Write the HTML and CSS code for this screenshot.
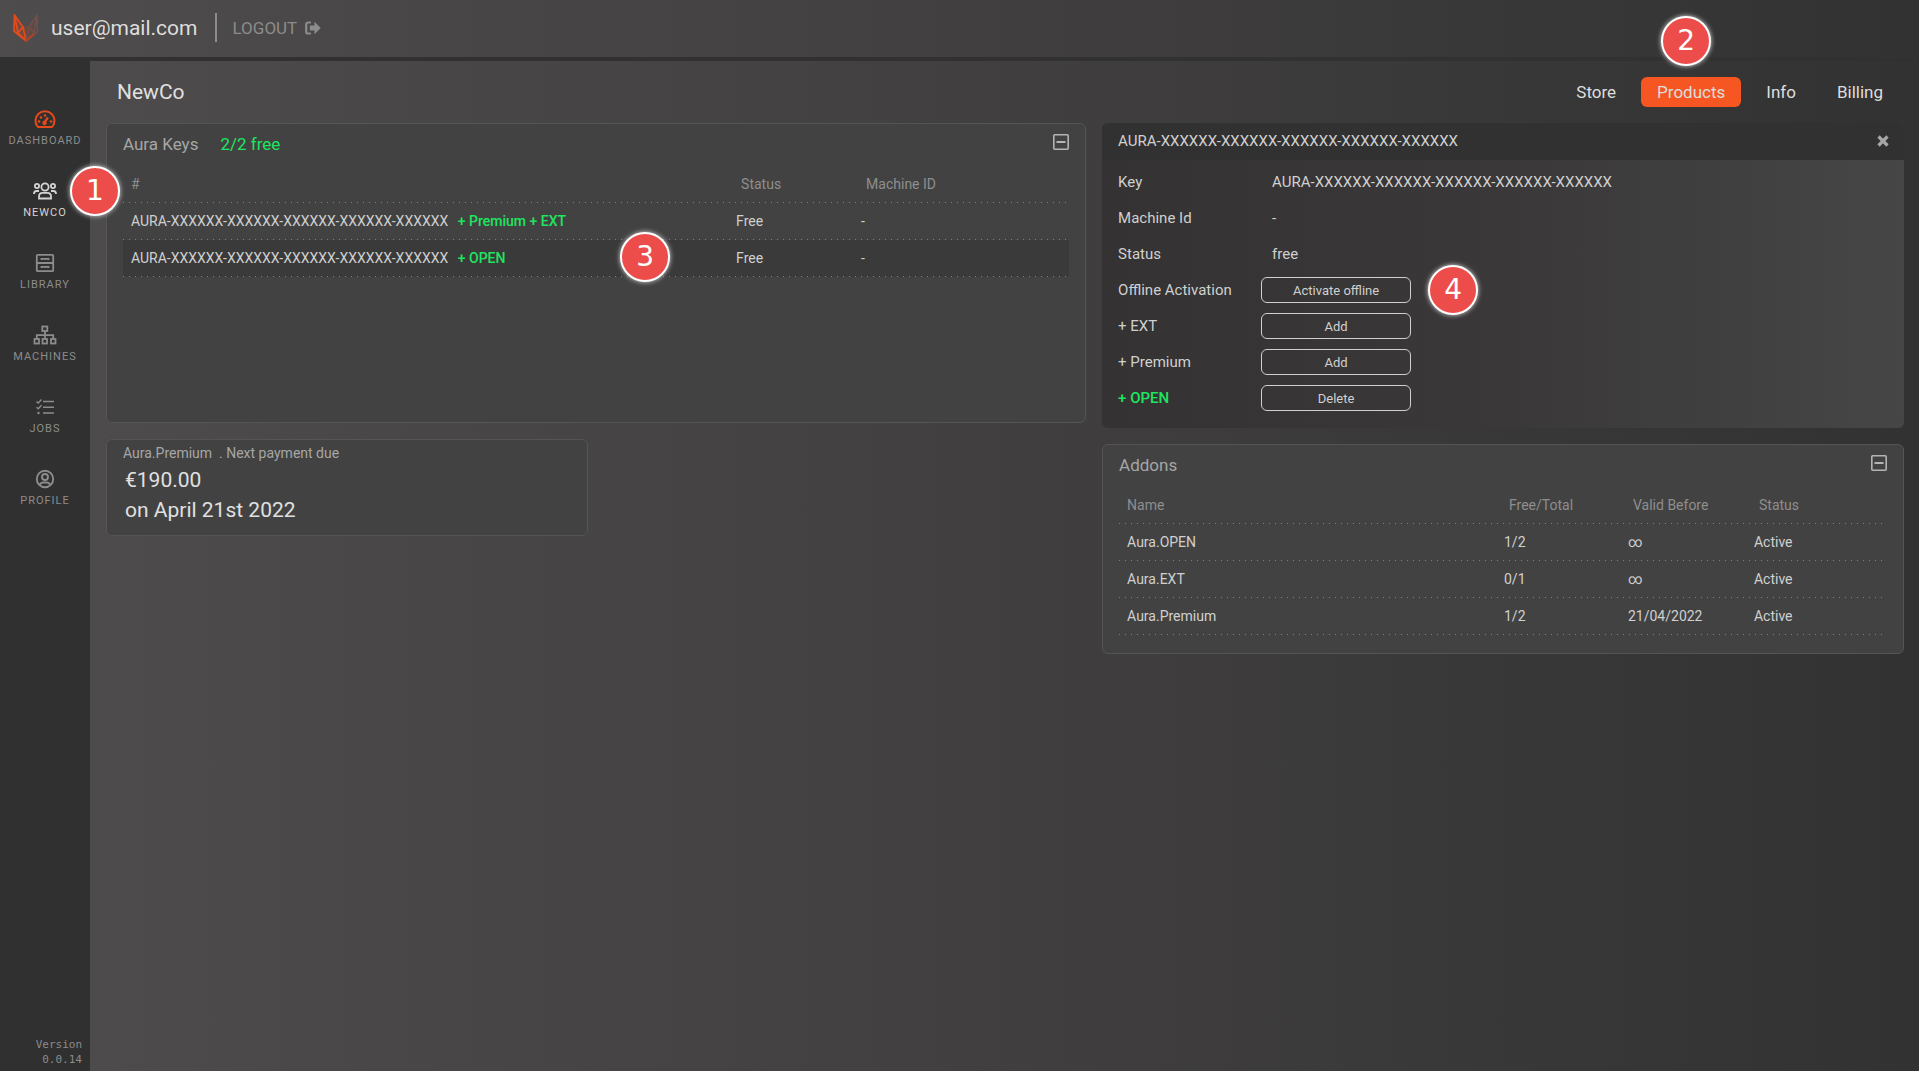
FILE: index.html
```html
<!DOCTYPE html>
<html lang="en">
<head>
  <meta charset="UTF-8">
  <meta name="viewport" content="width=device-width, initial-scale=1.0">
  <title>NewCo - Products</title>
  <link rel="stylesheet" href="styles.css">
</head>
<body>
  <header class="topbar">
    <svg class="logo" viewBox="0 0 26 28" width="26" height="28" aria-hidden="true">
      <defs>
        <linearGradient id="fox" x1="0" y1="0" x2="1" y2="0">
          <stop offset="0" stop-color="#f04a16"/>
          <stop offset="0.5" stop-color="#b04426"/>
          <stop offset="1" stop-color="#5a4a48"/>
        </linearGradient>
      </defs>
      <path d="M1 1 L0 17 L13 27 L24 18 L25 1 L16 12 L10 12 Z" fill="url(#fox)" opacity="0.3"/>
      <path d="M1.500 1 L10 13 L13 27 L1 17 Z M1.500 1 L5 19 L10 13 M5 19 L13 27" fill="none" stroke="#e24a1c" stroke-width="1.800"/>
      <path d="M24 1 L16 13 L13 27 L24.500 18 Z M24 1 L21 19 L16 13" fill="none" stroke="#70504a" stroke-width="1.500"/>
      <path d="M13 27 L21 20" stroke="#b04428" stroke-width="2.200"/>
    </svg>
    <span class="user">user@mail.com</span>
    <a href="#logout" class="logout">LOGOUT
      <svg viewBox="0 0 16 14" width="16" height="14" aria-hidden="true">
        <path d="M6 1.500H3A1.800 1.800 0 0 0 1.200 3.300V10.700A1.800 1.800 0 0 0 3 12.500H6" fill="none" stroke="currentColor" stroke-width="2.200"/>
        <path d="M9.500 0.800 L15.800 7 L9.500 13.200 V9.600 H4.800 V4.400 H9.500 Z" fill="currentColor"/>
      </svg>
    </a>
  </header>

  <div class="layout">
    <nav class="sidebar">
      <a href="#dashboard" class="side-link dashboard">
        <svg viewBox="0 0 22 18" width="22" height="18" fill="none" stroke="currentColor" stroke-width="2">
          <path d="M3.500 16.500 A9.500 9.500 0 1 1 18.500 16.500 Q18 17 17.500 17 H4.500 Q4 17 3.500 16.500 Z"/>
          <path d="M10 13 L14 7.500" stroke-width="2.200"/>
          <g fill="currentColor" stroke="none">
            <circle cx="10.500" cy="13" r="2.200"/><circle cx="5" cy="11.500" r="1.300"/>
            <circle cx="7" cy="7.500" r="1.300"/><circle cx="11" cy="5.500" r="1.300"/><circle cx="17" cy="11.500" r="1.300"/>
          </g>
        </svg>
        <span>DASHBOARD</span>
      </a>
      <a href="#newco" class="side-link current">
        <svg viewBox="0 0 24 18" width="24" height="18" fill="none" stroke="currentColor" stroke-width="1.800">
          <circle cx="12" cy="5" r="3.600"/>
          <circle cx="4" cy="4" r="2.100"/><circle cx="20" cy="4" r="2.100"/>
          <path d="M6 16.500 V14.500 Q6 10.800 9.500 10.800 H14.500 Q18 10.800 18 14.500 V16.500 Z"/>
          <path d="M1 12 Q1 9 3.500 9 H6 M23 12 Q23 9 20.500 9 H18"/>
        </svg>
        <span>NEWCO</span>
        <b class="step step-1">1</b>
      </a>
      <a href="#library" class="side-link">
        <svg viewBox="0 0 20 20" width="20" height="20" fill="none" stroke="currentColor" stroke-width="1.800">
          <rect x="1.800" y="1.800" width="16.400" height="16.400" rx="1"/>
          <path d="M2 10 H18 M6.500 7 V5.800 H13.500 V7 M6.500 15 V13.800 H13.500 V15"/>
        </svg>
        <span>LIBRARY</span>
      </a>
      <a href="#machines" class="side-link">
        <svg viewBox="0 0 24 20" width="24" height="20" fill="none" stroke="currentColor" stroke-width="1.800">
          <rect x="9.300" y="1.500" width="5" height="4.500"/>
          <rect x="1.500" y="14" width="4.500" height="4.500"/><rect x="9.500" y="14" width="4.500" height="4.500"/><rect x="18" y="14" width="4.500" height="4.500"/>
          <path d="M12 6 V14 M3.800 14 V10.200 H20.200 V14"/>
        </svg>
        <span>MACHINES</span>
      </a>
      <a href="#jobs" class="side-link">
        <svg viewBox="0 0 20 18" width="20" height="18" fill="none" stroke="currentColor" stroke-width="1.400">
          <path d="M8 3.500 H19 M8 9.200 H19 M8 15 H19"/>
          <path d="M1.500 3.500 L3.200 5 L6.500 1.500 M1.500 9.200 L3.200 10.800 L6.500 7.300"/>
          <circle cx="3.500" cy="15" r="1.200" fill="currentColor" stroke="none"/>
        </svg>
        <span>JOBS</span>
      </a>
      <a href="#profile" class="side-link">
        <svg viewBox="0 0 20 20" width="20" height="20" fill="none" stroke="currentColor" stroke-width="1.900">
          <circle cx="10" cy="10" r="8.200"/><circle cx="10" cy="8" r="3"/>
          <path d="M4.500 15.800 Q6 13.500 8 13.500 H12 Q14 13.500 15.500 15.800"/>
        </svg>
        <span>PROFILE</span>
      </a>
      <p class="version">Version<br>0.0.14</p>
    </nav>

    <main>
      <div class="page-head">
        <h1>NewCo</h1>
        <nav class="tabs">
          <a href="#store">Store</a>
          <a href="#products" class="active">Products<b class="step step-2">2</b></a>
          <a href="#info">Info</a>
          <a href="#billing">Billing</a>
        </nav>
      </div>

      <div class="columns">
        <div class="column">
          <section class="panel keys">
            <div class="panel-head">
              <h2>Aura Keys</h2>
              <span class="free">2/2 free</span>
              <button class="collapse" aria-label="Collapse">
                <svg viewBox="0 0 16 16" width="16" height="16" fill="none" stroke="currentColor" stroke-width="1.600"><rect x="0.800" y="0.800" width="14.400" height="14.400" rx="1"/><path d="M3.500 8 H12.500" stroke-width="2"/></svg>
              </button>
            </div>
            <table>
              <thead>
                <tr><th>#</th><th class="col-status">Status</th><th class="col-machine">Machine ID</th></tr>
              </thead>
              <tbody>
                <tr>
                  <td>AURA-XXXXXX-XXXXXX-XXXXXX-XXXXXX-XXXXXX <span class="addon">+ Premium + EXT</span></td>
                  <td>Free</td>
                  <td>-</td>
                </tr>
                <tr class="selected">
                  <td>AURA-XXXXXX-XXXXXX-XXXXXX-XXXXXX-XXXXXX <span class="addon">+ OPEN</span><b class="step step-3">3</b></td>
                  <td>Free</td>
                  <td>-</td>
                </tr>
              </tbody>
            </table>
          </section>

          <section class="panel payment">
            <h3>Aura.Premium &nbsp;. Next payment due</h3>
            <p>€190.00</p>
            <p>on April 21st 2022</p>
          </section>
        </div>

        <div class="column">
          <section class="detail">
            <div class="detail-head">
              <h2>AURA-XXXXXX-XXXXXX-XXXXXX-XXXXXX-XXXXXX</h2>
              <button class="close" aria-label="Close">
                <svg viewBox="0 0 12 12" width="12" height="12" stroke="currentColor" stroke-width="3.200"><path d="M1.500 1.500 L10.500 10.500 M10.500 1.500 L1.500 10.500"/></svg>
              </button>
            </div>
            <dl>
              <dt>Key</dt>
              <dd class="value">AURA-XXXXXX-XXXXXX-XXXXXX-XXXXXX-XXXXXX</dd>
              <dt>Machine Id</dt>
              <dd class="value">-</dd>
              <dt>Status</dt>
              <dd class="value">free</dd>
              <dt>Offline Activation</dt>
              <dd><button>Activate offline</button><b class="step step-4">4</b></dd>
              <dt>+ EXT</dt>
              <dd><button>Add</button></dd>
              <dt>+ Premium</dt>
              <dd><button>Add</button></dd>
              <dt class="owned">+ OPEN</dt>
              <dd><button>Delete</button></dd>
            </dl>
          </section>

          <section class="panel addons">
            <div class="panel-head">
              <h2>Addons</h2>
              <button class="collapse" aria-label="Collapse">
                <svg viewBox="0 0 16 16" width="16" height="16" fill="none" stroke="currentColor" stroke-width="1.600"><rect x="0.800" y="0.800" width="14.400" height="14.400" rx="1"/><path d="M3.500 8 H12.500" stroke-width="2"/></svg>
              </button>
            </div>
            <table>
              <thead>
                <tr><th>Name</th><th class="col-total">Free/Total</th><th class="col-valid">Valid Before</th><th class="col-active">Status</th></tr>
              </thead>
              <tbody>
                <tr><td>Aura.OPEN</td><td>1/2</td><td>∞</td><td>Active</td></tr>
                <tr><td>Aura.EXT</td><td>0/1</td><td>∞</td><td>Active</td></tr>
                <tr><td>Aura.Premium</td><td>1/2</td><td>21/04/2022</td><td>Active</td></tr>
              </tbody>
            </table>
          </section>
        </div>
      </div>
    </main>
  </div>
</body>
</html>
```

FILE: styles.css
```css
* {
  box-sizing: border-box;
}
body {
  margin: 0;
  min-height: 100vh;
  display: flex;
  flex-direction: column;
  font-family: Roboto, sans-serif;
  font-size: 14px;
  color: #d0d0d0;
  background: linear-gradient(to right, #4e4c4c, #403e3e 55%, #323232);
}
h1, h2, h3, p, dl, dd {
  margin: 0;
  font-weight: 400;
}
a {
  color: inherit;
  text-decoration: none;
}
button {
  font-family: inherit;
  color: inherit;
  background: none;
  border: 0;
  padding: 0;
  cursor: pointer;
}
svg {
  display: block;
}

/* Top bar */
.topbar {
  display: flex;
  align-items: center;
  height: 61px;
  padding: 0 13px 2px;
  border-bottom: 4px solid #313131;
}
.user {
  margin-left: 12px;
  font-size: 21px;
  color: #dedede;
}
.logout {
  display: flex;
  align-items: center;
  gap: 8px;
  height: 29px;
  margin-left: 17px;
  padding-left: 16px;
  border-left: 2px solid #8c8c8c;
  font-size: 17px;
  color: #8c8c8c;
}

/* Sidebar */
.layout {
  flex: 1;
  display: flex;
}
.sidebar {
  width: 90px;
  display: flex;
  flex-direction: column;
  gap: 30px;
  padding: 46px 0 4px;
  background: #303030;
}
.side-link {
  position: relative;
  display: grid;
  grid-template-rows: 24px 18px;
  place-items: center;
  font-size: 11px;
  letter-spacing: 1px;
  color: #8c8c8c;
}
.side-link.dashboard svg {
  color: #e64a19;
}
.side-link.current {
  color: #d4d4d4;
}
.version {
  margin-top: auto;
  padding-right: 8px;
  text-align: right;
  font: 11px/15px "DejaVu Sans Mono", monospace;
  color: #8c8c8c;
}

/* Content */
main {
  flex: 1;
  min-width: 0;
  padding: 0 15px 16px 16px;
}
.page-head {
  display: flex;
  align-items: center;
  justify-content: space-between;
  height: 62px;
  padding: 0 5px 0 11px;
}
h1 {
  font-size: 21px;
  color: #e0e0e0;
}
.tabs {
  display: flex;
  gap: 9px;
}
.tabs a {
  position: relative;
  padding: 0 16px;
  border-radius: 6px;
  font-size: 17px;
  line-height: 30px;
  color: #dedede;
}
.tabs .active {
  background: #f65621;
}
.columns {
  display: grid;
  grid-template-columns: 11fr 9fr;
  gap: 16px;
}
.column {
  display: flex;
  flex-direction: column;
  gap: 16px;
  min-width: 0;
}

/* Panels */
.panel {
  padding: 0 16px 18px;
  background: #424242;
  border: 1px solid #555;
  border-radius: 6px;
}
.panel-head {
  display: flex;
  align-items: center;
  height: 40px;
  margin-bottom: 2px;
}
.panel h2 {
  font-size: 17px;
  color: #a6a6a6;
}
.free {
  margin-left: 22px;
  font-size: 17px;
  color: #1ee560;
}
.collapse {
  margin-left: auto;
  padding-bottom: 4px;
  color: #b4b4b4;
}
.keys {
  min-height: 300px;
}

table {
  width: 100%;
  table-layout: fixed;
  border-collapse: collapse;
}
tr {
  height: 37px;
  background: repeating-linear-gradient(to right, #808080 0 1px, transparent 1px 6px) bottom / 100% 1px no-repeat;
}
tr.selected {
  background-color: #3a3a3a;
}
th, td {
  position: relative;
  padding: 0 8px 2px;
  text-align: left;
  white-space: nowrap;
}
th {
  padding-left: 13px;
  font-weight: 400;
  color: #8e8e8e;
}
th:first-child {
  padding-left: 8px;
}
.addon {
  margin-left: 6px;
  font-weight: 500;
  color: #1ee560;
}
.col-status {
  width: 125px;
}
.col-machine {
  width: 216px;
}
.col-total {
  width: 124px;
}
.col-valid {
  width: 126px;
}
.col-active {
  width: 141px;
}

.payment {
  width: calc(50% - 8px);
  padding: 3px 16px 10px;
}
.payment h3 {
  margin-bottom: 2px;
  font-size: 14px;
  line-height: 20px;
  color: #a6a6a6;
}
.payment p {
  padding-left: 2px;
  font-size: 21px;
  line-height: 30px;
  color: #e0e0e0;
}

/* Selected key */
.detail {
  border-radius: 6px;
  background: linear-gradient(to right, #343232, #3a3838 50%, #464646);
}
.detail-head {
  display: flex;
  align-items: center;
  justify-content: space-between;
  height: 37px;
  padding: 0 15px 2px 16px;
  border-radius: 6px 6px 0 0;
  background: #313131;
}
.detail-head h2 {
  font-size: 15px;
}
.close {
  color: #a6a6a6;
}
dl {
  display: grid;
  grid-template-columns: 143px 1fr;
  grid-auto-rows: 36px;
  align-items: center;
  padding: 4px 16px 12px;
  font-size: 15px;
}
dd {
  position: relative;
}
.value {
  padding-left: 11px;
}
.owned {
  font-weight: 500;
  color: #1ee560;
}
dd button {
  display: block;
  width: 150px;
  height: 26px;
  border: 1px solid #d0d0d0;
  border-radius: 6px;
  font-size: 13px;
}

/* Numbered steps over the page */
.step {
  position: absolute;
  z-index: 1;
  width: 50px;
  height: 50px;
  border: 2px solid #fff;
  border-radius: 50%;
  background: #ec4d4b;
  box-shadow: 0 0 5px #ddd;
  font: 28px/46px "DejaVu Sans", sans-serif;
  letter-spacing: 0;
  text-align: center;
  color: #fff;
}
.step-1 {
  top: -13px;
  left: 70px;
}
.step-2 {
  top: -61px;
  left: 20px;
}
.step-3 {
  top: -8px;
  right: 58px;
}
.step-4 {
  top: -12px;
  left: 167px;
}
```
